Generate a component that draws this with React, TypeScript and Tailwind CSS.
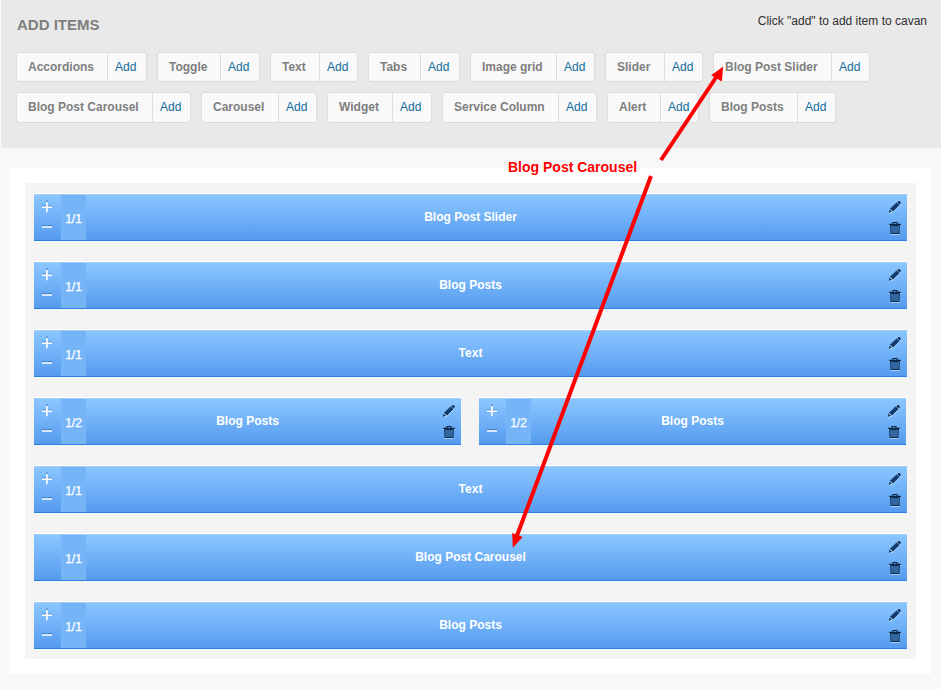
type Item = { label: string; name: string; add: string };

const firstRow: Item[] = [
  { label: 'Accordions', name: 'w-[91px]', add: 'w-[38px]' },
  { label: 'Toggle', name: 'w-[63px]', add: 'w-[38px]' },
  { label: 'Text', name: 'w-[49px]', add: 'w-[37px]' },
  { label: 'Tabs', name: 'w-[52px]', add: 'w-[38px]' },
  { label: 'Image grid', name: 'w-[86px]', add: 'w-[37px]' },
  { label: 'Slider', name: 'w-[59px]', add: 'w-[37px]' },
  { label: 'Blog Post Slider', name: 'w-[118px]', add: 'w-[37px]' },
];

const secondRow: Item[] = [
  { label: 'Blog Post Carousel', name: 'w-[136px]', add: 'w-[37px]' },
  { label: 'Carousel', name: 'w-[77px]', add: 'w-[37px]' },
  { label: 'Widget', name: 'w-[65px]', add: 'w-[38px]' },
  { label: 'Service Column', name: 'w-[116px]', add: 'w-[37px]' },
  { label: 'Alert', name: 'w-[53px]', add: 'w-[37px]' },
  { label: 'Blog Posts', name: 'w-[88px]', add: 'w-[37px]' },
];

function ItemButton({ item }: { item: Item }) {
  return (
    <div className="flex h-full shrink-0 rounded-[3px] border border-[#dcdcdc] bg-[#f9f9f9] leading-[16px]">
      <span className={`${item.name} whitespace-nowrap border-r border-[#dcdcdc] pt-[6px] pl-[11px] font-bold text-[#7f7f7f]`}>
        {item.label}
      </span>
      <a className={`${item.add} pt-[6px] pl-[7px] text-[#126c9b]`}>Add</a>
    </div>
  );
}

function Pencil() {
  return (
    <svg width="14" height="14" viewBox="0 0 14 14" className="block">
      <path d="M1 14l1.2-3.2L10 3l2.4 2.3-7.7 7.6z" fill="#b9dcff" opacity=".7" />
      <path d="M.8 12.7l1-3.2 2.3 2.2z" fill="#0c2a4e" />
      <path d="M2.6 8.7L8.7 2.9l2.2 2.2L5 11.1z" fill="#0f3d75" stroke="#0a2340" strokeWidth=".8" />
      <path d="M9.4 2.2l1.3-1.2c.5-.5 2.6 1.4 2.1 2l-1.2 1.4z" fill="#0c2a4e" />
      <path d="M2.2 10l1.5 1.5" stroke="#9fcaf5" strokeWidth=".7" />
    </svg>
  );
}

function Trash() {
  return (
    <svg width="12" height="14" viewBox="0 0 12 14" className="block">
      <path d="M1.5 13.5h9M0 4.5h1.5M10.5 4.5H12" stroke="#b9dcff" opacity=".8" />
      <path d="M4 3V1.5h4V3M0 3.4h12" fill="none" stroke="#0c2a4e" strokeWidth="1.2" />
      <path d="M1.7 4.5h8.6l-.4 8H2.1z" fill="#4f92d6" stroke="#0c2a4e" strokeWidth="1.1" />
      <path d="M4 5v7M6 5v7M8 5v7" stroke="#0e315c" strokeWidth=".9" />
    </svg>
  );
}

function Block({ title, size = '1/1', resize = true, width = 'w-full' }: { title: string; size?: string; resize?: boolean; width?: string }) {
  return (
    <div className={`${width} flex h-[47px] shrink-0 border-t border-b border-t-[#a3cffb] border-b-[#2a80e4] bg-gradient-to-b from-[#8bc6ff] to-[#559bee] font-bold text-white shadow-[0_-1px_0_#ffffff]`}>
      <div className="w-[27px] shrink-0">
        {resize && (
          <svg width="27" height="45" viewBox="0 0 27 45" className="block">
            <path d="M8 11.2h10M8 30.7h10M12 6.2h2" stroke="#427cb8" strokeWidth="1" />
            <path d="M8 12.3h10M8 32h10" stroke="#fff" strokeWidth="1.6" />
            <path d="M12.9 7v10.2" stroke="#fff" strokeWidth="1.6" />
          </svg>
        )}
      </div>
      <div className="flex w-[25px] shrink-0 justify-center bg-[#76b4f8] pt-[17px] text-[12px] leading-[14px] font-normal">
        <span className="[-webkit-text-stroke:0.25px_white]">{size}</span>
      </div>
      <div className="flex-1 pr-[20px] pt-[15px] text-center text-[12px] leading-[14px]">{title}</div>
      <div className="flex w-[32px] shrink-0 flex-col items-center gap-[7px] pl-[8px] pt-[5px]">
        <Pencil />
        <Trash />
      </div>
    </div>
  );
}

function Arrows() {
  return (
    <svg width="941" height="689" viewBox="0 0 941 689" className="pointer-events-none absolute top-0 left-0" fill="#fe0000">
      <path d="M661 160L717 76M651 176L516.5 537" stroke="#fe0000" strokeWidth="4" />
      <path d="M723.2 66.5L711.2 75.2L721.8 81.5z" />
      <path d="M512.8 547.7L512.2 533L522.7 537z" />
    </svg>
  );
}

export default function App() {
  return (
    <div className="relative h-[689px] w-[941px] overflow-hidden bg-[#f8f8f8] font-['Liberation_Sans',Arial,sans-serif] text-[12px]">
      <header className="ml-px h-[148px] bg-[#e9e9e9] pl-[15px]">
        <div className="flex h-[52px] justify-between pr-[14px]">
          <h1 className="pt-[16px] pl-px text-[15px] leading-[18px] font-bold text-[#7f7f7f]">ADD ITEMS</h1>
          <p className="pt-[14px] leading-[14px] text-[#303030]">Click "add" to add item to cavan</p>
        </div>
        <div className="flex h-[30px] gap-[10px]">
          {firstRow.map((item) => <ItemButton key={item.label} item={item} />)}
        </div>
        <div className="mt-[10px] flex h-[31px] gap-[10px]">
          {secondRow.map((item) => <ItemButton key={item.label} item={item} />)}
        </div>
      </header>
      <div className="h-[20px]" />
      <main className="mx-[10px] h-[506px] bg-white p-[15px]">
        <div className="flex h-[476px] flex-col gap-[21px] bg-[#f4f4f4] px-[9px] pt-[11px]">
          <div className="flex"><Block title="Blog Post Slider" /></div>
          <div className="flex"><Block title="Blog Posts" /></div>
          <div className="flex"><Block title="Text" /></div>
          <div className="flex gap-[18px]">
            <Block title="Blog Posts" size="1/2" width="w-[427px]" />
            <Block title="Blog Posts" size="1/2" width="w-[427px]" />
          </div>
          <div className="flex"><Block title="Text" /></div>
          <div className="flex"><Block title="Blog Post Carousel" resize={false} /></div>
          <div className="flex"><Block title="Blog Posts" /></div>
        </div>
      </main>
      <span className="absolute top-[159px] left-[508px] text-[14px] leading-[16px] font-bold whitespace-nowrap text-[#fe0000]">
        Blog Post Carousel
      </span>
      <Arrows />
    </div>
  );
}
